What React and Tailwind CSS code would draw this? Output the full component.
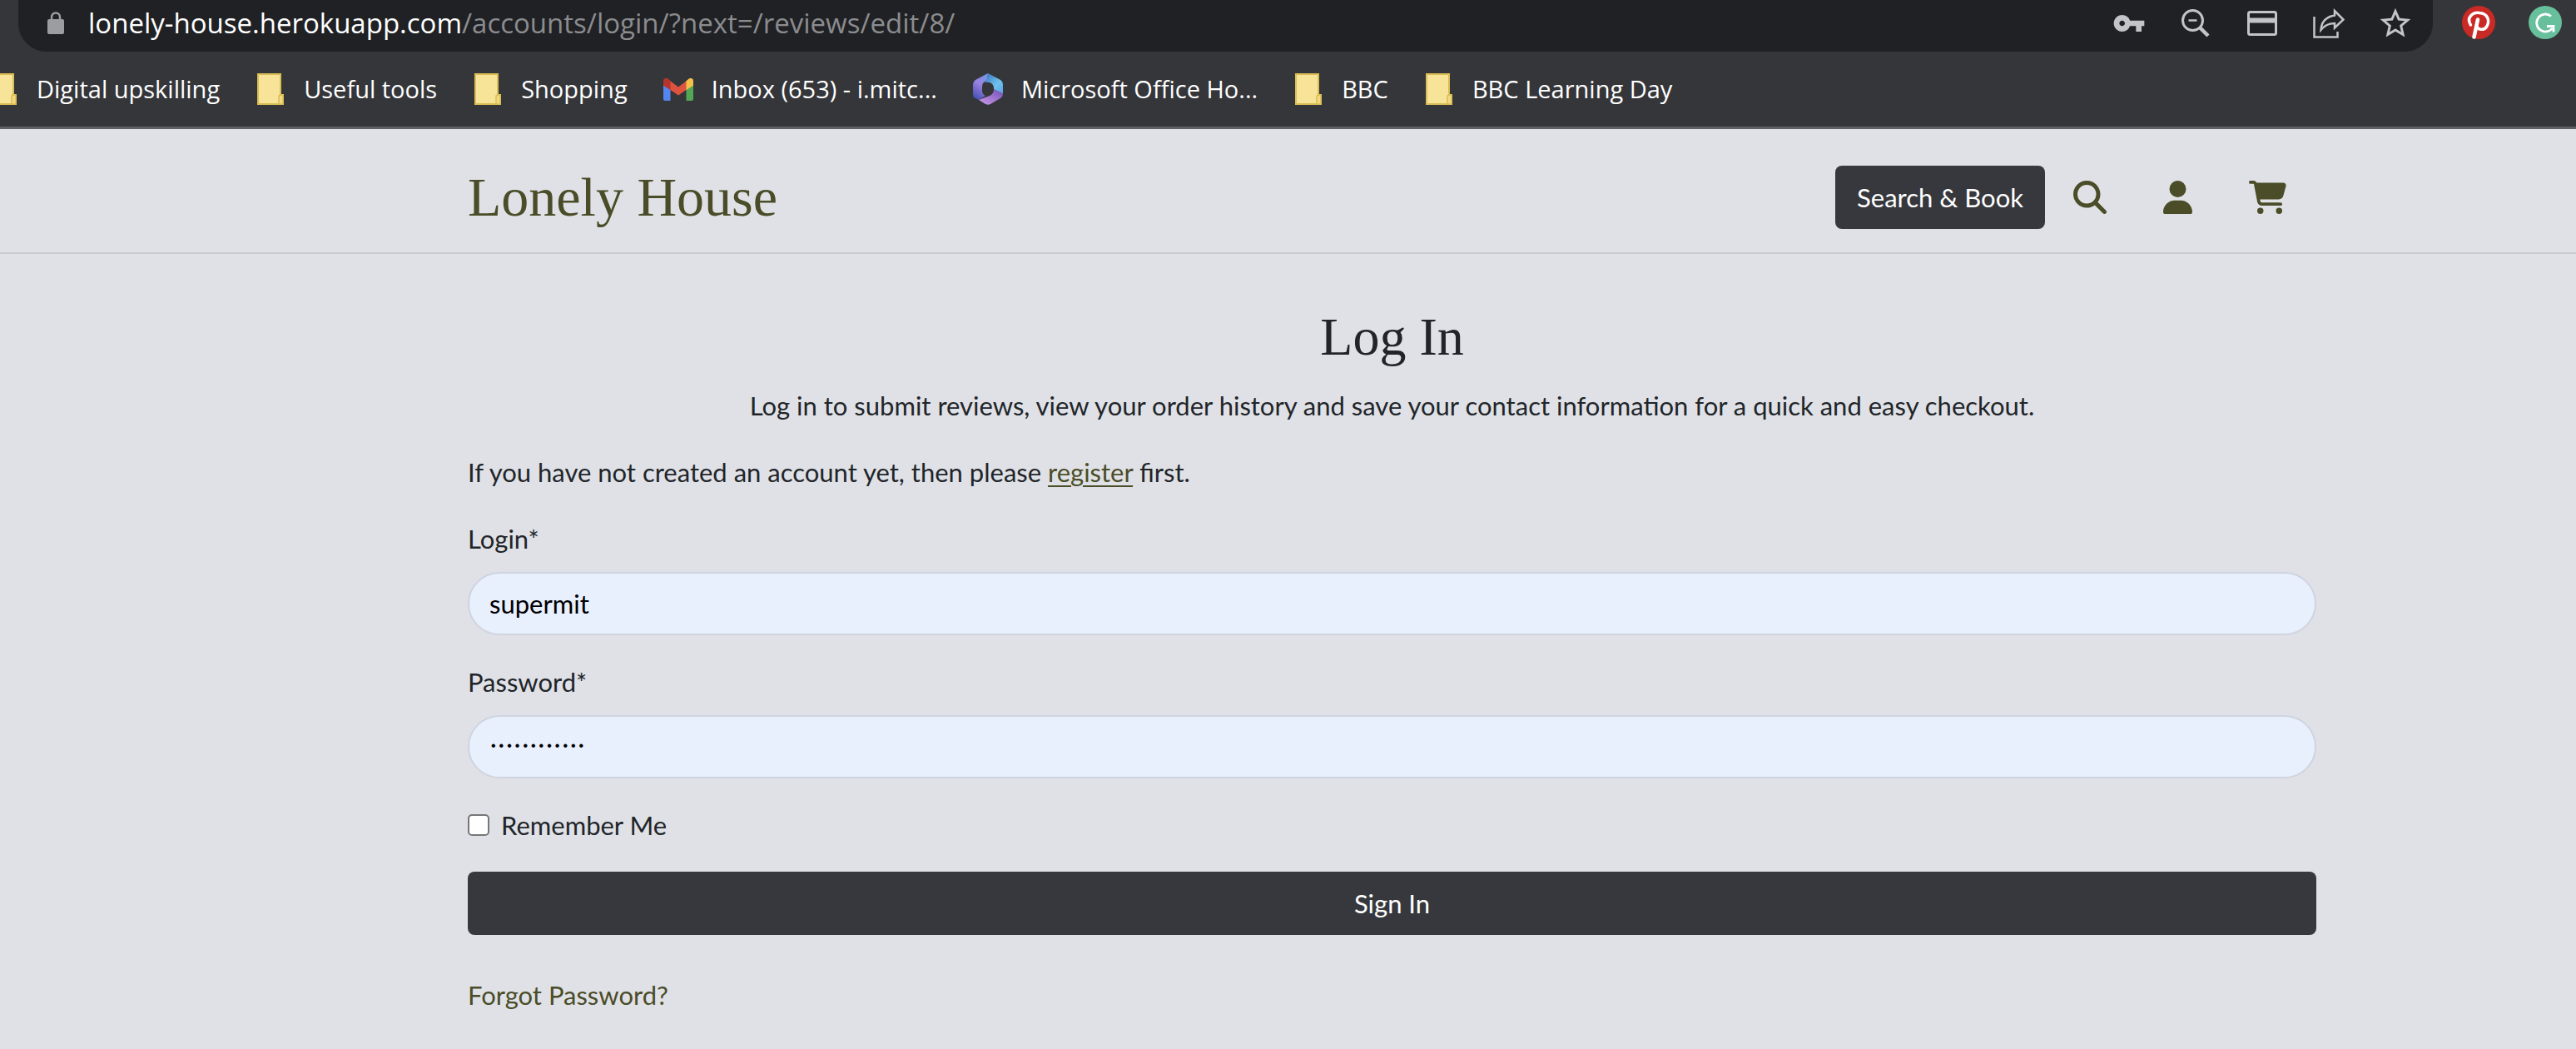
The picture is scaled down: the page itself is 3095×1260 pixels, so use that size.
import { FaMagnifyingGlass, FaUser, FaCartShopping } from "react-icons/fa6";
import { MdVpnKey, MdStarOutline } from "react-icons/md";

function Lock() {
  return (
    <svg viewBox="0 0 22 28" className="h-7 w-[22px] shrink-0 text-[#9c9da0]" aria-hidden="true">
      <rect x="1" y="9" width="20" height="18" rx="2" fill="currentColor" />
      <path d="M6 10V6.500a5 5 0 0 1 10 0V10" fill="none" stroke="currentColor" strokeWidth="2.500" />
    </svg>
  );
}

function Folder() {
  return (
    <svg viewBox="0 0 36 38" className="h-[38px] w-9 shrink-0" aria-hidden="true">
      <path d="M3 1h27v25h3v11H3z" fill="#f7e499" stroke="#d9bd55" strokeWidth="2" />
      <path d="M28 37v-9q0-2 2-2h3v11z" fill="#f1da80" stroke="#d9bd55" strokeWidth="1.500" />
    </svg>
  );
}

function Gmail() {
  return (
    <svg viewBox="0 0 36 28" className="h-7 w-9 shrink-0" aria-hidden="true">
      <path d="M0 8l8.500 5v15H2q-2 0-2-2z" fill="#5486ee" />
      <path d="M36 8l-8.500 5v15H34q2 0 2-2z" fill="#53a654" />
      <path d="M27.500 4.500L31 1.500Q32.500.5 34 1.200 36 2.200 36 4.500V9.500L27.500 15z" fill="#f5c04a" />
      <path d="M8.500 4.500L5 1.500Q3.500.5 2 1.200 0 2.200 0 4.500V9.500L8.500 15z" fill="#b5352c" />
      <path d="M4 1l14 10.500L32 1l-4.500 14L18 21.500 8.500 15z" fill="#dd5340" />
      <path d="M27.500 4.500L31 1.500Q32.500.5 34 1.200 36 2.200 36 4.500V9.500L27.500 15z" fill="#f5c04a" />
      <path d="M8.500 4.500L5 1.500Q3.500.5 2 1.200 0 2.200 0 4.500V9.500L8.500 15z" fill="#b5352c" />
    </svg>
  );
}

function Office() {
  return (
    <svg viewBox="0 0 36 38" className="h-[38px] w-9 shrink-0" aria-hidden="true">
      <defs>
        <linearGradient id="officeLeft" x1="0.8" y1="0" x2="0.4" y2="1">
          <stop offset="0" stopColor="#6f9be8" />
          <stop offset="0.45" stopColor="#9b82e0" />
          <stop offset="1" stopColor="#4a55b8" />
        </linearGradient>
        <linearGradient id="officeRight" x1="0" y1="0" x2="1" y2="1">
          <stop offset="0" stopColor="#3a6fc0" />
          <stop offset="0.6" stopColor="#6fc3ec" />
          <stop offset="1" stopColor="#5b9fe6" />
        </linearGradient>
        <linearGradient id="officeBottom" x1="0" y1="1" x2="1" y2="0">
          <stop offset="0" stopColor="#cf9ce8" />
          <stop offset="1" stopColor="#6f50b8" />
        </linearGradient>
      </defs>
      <path d="M18 0L3 8Q0 10 0 13v13q0 3 3 4l4 2 8-5q-4-2-4-6v-5q0-4 3-6l3-2z" fill="url(#officeLeft)" />
      <path d="M18 0l15 8q3 2 3 6v11q-1-1-2-1l-9-5v-2q0-3-3-5t-8-1q3-3 4-11z" fill="url(#officeRight)" />
      <path d="M36 24q0 4-3 6l-12 7q-3 1.500-6 0l-8-5 13-5q5-2 5-8z" fill="url(#officeBottom)" />
    </svg>
  );
}

function ZoomOut() {
  return (
    <svg viewBox="0 0 36 36" className="size-9" fill="none" stroke="currentColor" aria-hidden="true">
      <circle cx="14.500" cy="14.500" r="12" strokeWidth="3" />
      <path d="M9.500 14.500h10" strokeWidth="2.500" />
      <path d="M23.500 23.500l9.500 9.500" strokeWidth="4.500" />
    </svg>
  );
}

function Card() {
  return (
    <svg viewBox="0 0 36 30" className="h-[30px] w-9" aria-hidden="true">
      <rect x="1.500" y="1.500" width="33" height="27" rx="2" fill="none" stroke="currentColor" strokeWidth="3" />
      <path d="M2 8.500h32v6H2z" fill="currentColor" />
    </svg>
  );
}

function Share() {
  return (
    <svg viewBox="0 0 38 36" className="h-9 w-[38px]" fill="none" stroke="currentColor" strokeWidth="2.500" aria-hidden="true">
      <path d="M1.500 10v24.500H29.500V28" />
      <path d="M26 3l10.500 10.500L26 23.500V18q-10 0-16.500 8Q10.500 11 26 8.500z" />
    </svg>
  );
}

function Pinterest() {
  return (
    <svg viewBox="0 0 40 40" className="size-10" aria-hidden="true">
      <circle cx="20" cy="20" r="20" fill="#c92a26" />
      <g fill="none" stroke="#fff" strokeLinecap="round">
        <path d="M10.500 23Q6.500 16.500 10.500 12T21 8.500q7 .5 9.500 5.500t-.5 10.500q-3 5-8.500 3.500-3-1-3.500-3" strokeWidth="3.500" />
        <path d="M19 16.500l-4.500 21" strokeWidth="4.500" />
      </g>
    </svg>
  );
}

function Grammarly() {
  return (
    <svg viewBox="0 0 40 40" className="size-10" aria-hidden="true">
      <circle cx="20" cy="20" r="20" fill="#67bf9c" />
      <path d="M27 12.500A10.500 10.500 0 1 0 28.500 27M22 24.500h8v7" fill="none" stroke="#fff" strokeWidth="2.800" />
    </svg>
  );
}

const bookmarks = [
  { label: "Digital upskilling", Icon: Folder },
  { label: "Useful tools", Icon: Folder },
  { label: "Shopping", Icon: Folder },
  { label: "Inbox (653) - i.mitc...", Icon: Gmail },
  { label: "Microsoft Office Ho...", Icon: Office },
  { label: "BBC", Icon: Folder },
  { label: "BBC Learning Day", Icon: Folder },
];

const pageActions = [
  { label: "Passwords", icon: <MdVpnKey className="size-10" /> },
  { label: "Zoom out", icon: <ZoomOut /> },
  { label: "Payment methods", icon: <Card /> },
  { label: "Share", icon: <Share /> },
  { label: "Bookmark", icon: <MdStarOutline className="size-11" /> },
];

function BrowserBar() {
  return (
    <header className="border-b-[3px] border-[#5f6065] bg-[#35363a] font-['Open_Sans','Noto_Sans',sans-serif] text-white">
      <div className="flex h-[62px] items-stretch pr-[17px] pl-[22px]">
        <div className="flex min-w-0 flex-1 items-center rounded-b-[34px] bg-[#202124] pr-[5px] pb-[6px] pl-[34px]">
          <Lock />
          <p className="min-w-0 flex-1 truncate pl-7 text-[33px] leading-[52px]">
            lonely-house.herokuapp.com
            <span className="text-[#8b8c8f]">/accounts/login/?next=/reviews/edit/8/</span>
          </p>
          <div className="flex shrink-0 items-center text-[#c3c4c9]">
            {pageActions.map((a) => (
              <button key={a.label} type="button" aria-label={a.label} className="flex w-20 justify-center">
                {a.icon}
              </button>
            ))}
          </div>
        </div>
        <div className="flex shrink-0 items-center gap-10 pb-[8px] pl-[35px]">
          <button type="button" aria-label="Pinterest"><Pinterest /></button>
          <button type="button" aria-label="Grammarly"><Grammarly /></button>
        </div>
      </div>
      <nav aria-label="Bookmarks" className="flex h-[90px] items-center gap-[43px] overflow-hidden text-[29px] leading-10">
        {bookmarks.map(({ label, Icon }) => (
          <a key={label} href="#" className="flex shrink-0 items-center gap-[22px] whitespace-nowrap first:-ml-[14px]">
            <Icon />
            {label}
          </a>
        ))}
      </nav>
    </header>
  );
}

function SiteHeader() {
  return (
    <header className="flex h-[150px] items-center justify-between border-b-2 border-[#c9cbd0] pt-4 pr-[312px] pl-[562px]">
      <a href="#" className="font-['Liberation_Serif',serif] text-[66px] leading-[76px] text-[#4a4d28]">
        Lonely House
      </a>
      <nav className="flex items-center text-[40px] text-[#4a4d28]">
        <a href="#" className="rounded-lg bg-[#37383d] px-[26px] py-[14px] text-[31px] leading-[48px] text-white">
          Search &amp; Book
        </a>
        <a href="#" aria-label="Search" className="px-[34px]"><FaMagnifyingGlass /></a>
        <a href="#" aria-label="Account" className="px-[34px]"><FaUser className="h-10 w-[35px]" /></a>
        <a href="#" aria-label="Cart" className="pr-9 pl-[34px]"><FaCartShopping className="h-10 w-[45px]" /></a>
      </nav>
    </header>
  );
}

const field =
  "block h-[76px] w-full rounded-full border-2 border-[#cfd4df] bg-[#e8effd] px-6 text-black outline-none";

export default function App() {
  return (
    <div className="min-h-screen bg-[#e0e1e6] font-['Lato',sans-serif] text-[31px] leading-[48px] text-[#212529]">
      <BrowserBar />
      <SiteHeader />
      <main className="pt-[62px] pr-[312px] pb-10 pl-[562px]">
        <h1 className="text-center font-['Liberation_Serif',serif] text-[64px] leading-[76px]">Log In</h1>
        <p className="mt-5 text-center">
          Log in to submit reviews, view your order history and save your contact information for a quick and easy checkout.
        </p>
        <p className="mt-8">
          If you have not created an account yet, then please{" "}
          <a href="#" className="text-[#4a4d28] underline decoration-2 underline-offset-4">register</a> first.
        </p>
        <form className="mt-8" onSubmit={(e) => e.preventDefault()}>
          <label htmlFor="login" className="mb-4 block">Login*</label>
          <input id="login" type="text" defaultValue="supermit" className={field} />
          <label htmlFor="password" className="mt-8 mb-4 block">Password*</label>
          <input
            id="password"
            type="password"
            defaultValue="abcdefghijkl"
            className={field + " font-['Liberation_Mono',monospace] text-[16px]"}
          />
          <div className="mt-8 flex items-center gap-[14px]">
            <input
              id="remember"
              type="checkbox"
              className="size-[26px] appearance-none rounded-[5px] border-2 border-[#767676] bg-white"
            />
            <label htmlFor="remember">Remember Me</label>
          </div>
          <button type="submit" className="mt-8 block h-[76px] w-full rounded-lg bg-[#37383d] text-white">
            Sign In
          </button>
        </form>
        <a href="#" className="mt-12 inline-block text-[#4a4d28]">Forgot Password?</a>
      </main>
    </div>
  );
}
